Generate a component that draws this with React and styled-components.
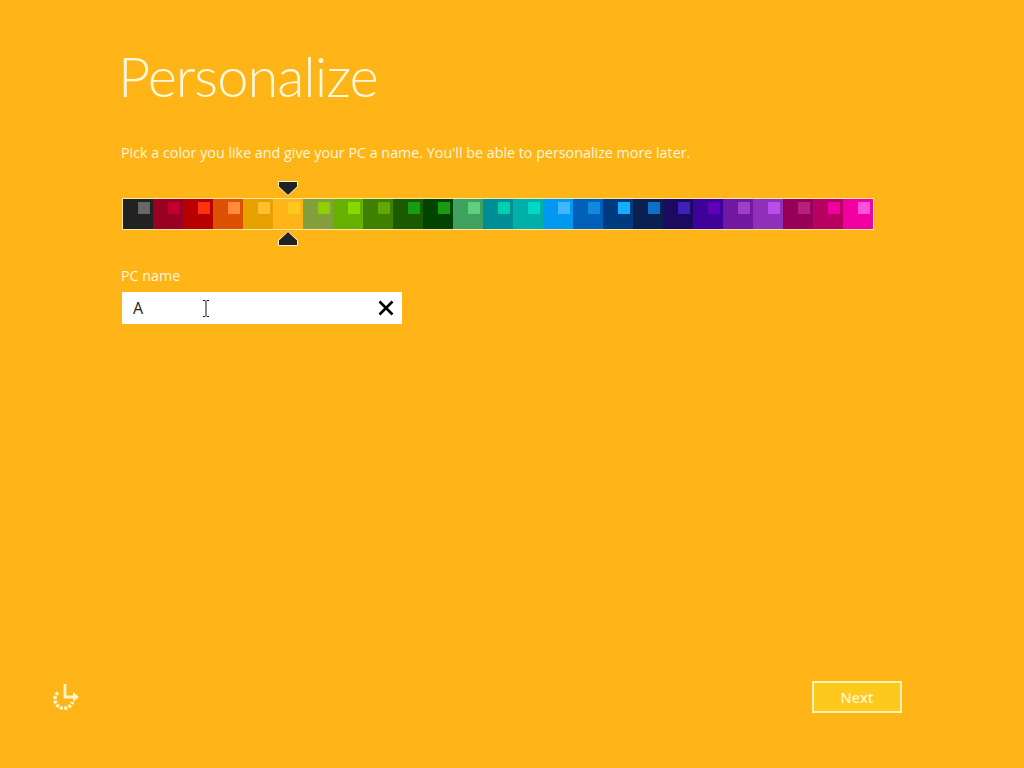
import styled, { createGlobalStyle } from "styled-components";

const GlobalStyle = createGlobalStyle`
  html, body {
    margin: 0;
    padding: 0;
    background: #ffb517;
  }
  * {
    box-sizing: border-box;
  }
`;

const Page = styled.div`
  width: 1024px;
  height: 768px;
  overflow: hidden;
  display: flex;
  flex-direction: column;
  justify-content: space-between;
  background: #ffb517;
  font-family: "Open Sans", "Liberation Sans", sans-serif;
`;

const Main = styled.main`
  padding: 40px 0 0 122px;
`;

const Title = styled.h1`
  margin: 0 0 0 -4px;
  font-family: Lato, "Open Sans", sans-serif;
  font-size: 56px;
  line-height: 72px;
  font-weight: 300;
  letter-spacing: -1px;
  color: #fff8dc;
`;

const Intro = styled.p`
  margin: 31px 0 0 -1px;
  font-size: 14.3px;
  line-height: 20px;
  color: #fff6da;
`;

const Palette = styled.div`
  display: flex;
  width: 752px;
  height: 32px;
  margin-top: 35px;
  border: 1px solid #ffe7a8;
`;

const Swatch = styled.div`
  position: relative;
  width: 30px;
  height: 30px;
  flex: none;
  background: ${(p) => p.$base};
`;

const SwatchDot = styled.span`
  display: block;
  width: 12px;
  height: 12px;
  margin: 3px 0 0 15px;
  background: ${(p) => p.$dot};
`;

const Marker = styled.svg`
  position: absolute;
  left: 5px;
  ${(p) => (p.$side === "top" ? "top: -18px;" : "bottom: -17px;")}
  width: 20px;
  height: 15px;
`;

const FieldLabel = styled.label`
  display: block;
  margin: 36px 0 0 -1px;
  font-size: 14.3px;
  line-height: 20px;
  color: #fff6da;
`;

const NameField = styled.div`
  display: flex;
  align-items: center;
  position: relative;
  width: 280px;
  height: 32px;
  margin-top: 6px;
  padding: 0 8px 0 11px;
  background: #fff;
  color: #222;
`;

const NameValue = styled.span`
  flex: 1;
  font-size: 16px;
  line-height: 32px;
`;

const Caret = styled.svg`
  position: absolute;
  left: 80px;
  top: 8px;
  width: 8px;
  height: 17px;
`;

const ClearIcon = styled.svg`
  width: 16px;
  height: 16px;
  flex: none;
`;

const Footer = styled.footer`
  display: flex;
  align-items: center;
  justify-content: space-between;
  padding: 0 122px 55px 53px;
`;

const SetupIcon = styled.svg`
  width: 27px;
  height: 26px;
`;

const NextButton = styled.button`
  width: 90px;
  height: 32px;
  padding: 0;
  border: 2px solid #fff3b0;
  background: #ffc81c;
  color: #fff6c4;
  font-family: inherit;
  font-size: 14.3px;
  font-weight: 600;
`;

const colors = [
  ["#222222", "#666666"],
  ["#980024", "#c2002c"],
  ["#b80000", "#ff3210"],
  ["#dc5200", "#ff8a40"],
  ["#e8a200", "#ffc030"],
  ["#ffb517", "#ffc81e"],
  ["#84a03c", "#90d000"],
  ["#66b000", "#88d800"],
  ["#3f8000", "#62a800"],
  ["#1c5a00", "#1a9c10"],
  ["#004400", "#1a9c10"],
  ["#40a060", "#60d080"],
  ["#008e96", "#00d0b0"],
  ["#00b0a8", "#00d8c8"],
  ["#0098f0", "#40b8ff"],
  ["#0060b8", "#1088e0"],
  ["#003a80", "#10b0ff"],
  ["#0a2050", "#1070c8"],
  ["#1a0a60", "#4020b8"],
  ["#40009a", "#6000b8"],
  ["#7018a0", "#a040c8"],
  ["#9030b8", "#b850e8"],
  ["#980058", "#b82080"],
  ["#b80060", "#f000a0"],
  ["#f000a0", "#ff50d8"],
];

const SELECTED = 5;

const App = () => {
  return (
    <Page>
      <GlobalStyle />
      <Main>
        <Title>Personalize</Title>
        <Intro>
          Pick a color you like and give your PC a name. You'll be able to
          personalize more later.
        </Intro>
        <Palette>
          {colors.map(([base, dot], i) => (
            <Swatch key={base + dot} $base={base}>
              <SwatchDot $dot={dot} />
              {i === SELECTED && (
                <>
                  <Marker $side="top" viewBox="0 0 20 15">
                    <path
                      d="M.5.5H19.5V5.5L10 14.5L.5 5.5Z"
                      fill="#222"
                      stroke="#fff3d0"
                    />
                  </Marker>
                  <Marker $side="bottom" viewBox="0 0 20 15">
                    <path
                      d="M.5 14.5H19.5V9.5L10 .5L.5 9.5Z"
                      fill="#222"
                      stroke="#fff3d0"
                    />
                  </Marker>
                </>
              )}
            </Swatch>
          ))}
        </Palette>
        <FieldLabel>PC name</FieldLabel>
        <NameField>
          <NameValue>A</NameValue>
          <Caret viewBox="0 0 8 17">
            <path
              d="M1 .5H3L4 1.5L5 .5H7M4 1.5V15.5M1 16.5H3L4 15.5L5 16.5H7"
              fill="none"
              stroke="#111"
            />
          </Caret>
          <ClearIcon viewBox="0 0 16 16">
            <path d="M1.5 1.5L14.5 14.5M14.5 1.5L1.5 14.5" stroke="#000" strokeWidth="2.6" />
          </ClearIcon>
        </NameField>
      </Main>
      <Footer>
        <SetupIcon viewBox="0 0 27 26">
          <path
            d="M5 8.5A9 9 0 1 0 19.5 18"
            fill="none"
            stroke="#fff3c8"
            strokeWidth="3.6"
            strokeDasharray="3 1.4"
          />
          <path d="M12 0V13H23" fill="none" stroke="#fff3c8" strokeWidth="2.8" />
          <path d="M20 8L26 13L20 18Z" fill="#fff3c8" />
        </SetupIcon>
        <NextButton>Next</NextButton>
      </Footer>
    </Page>
  );
};

export default App;
